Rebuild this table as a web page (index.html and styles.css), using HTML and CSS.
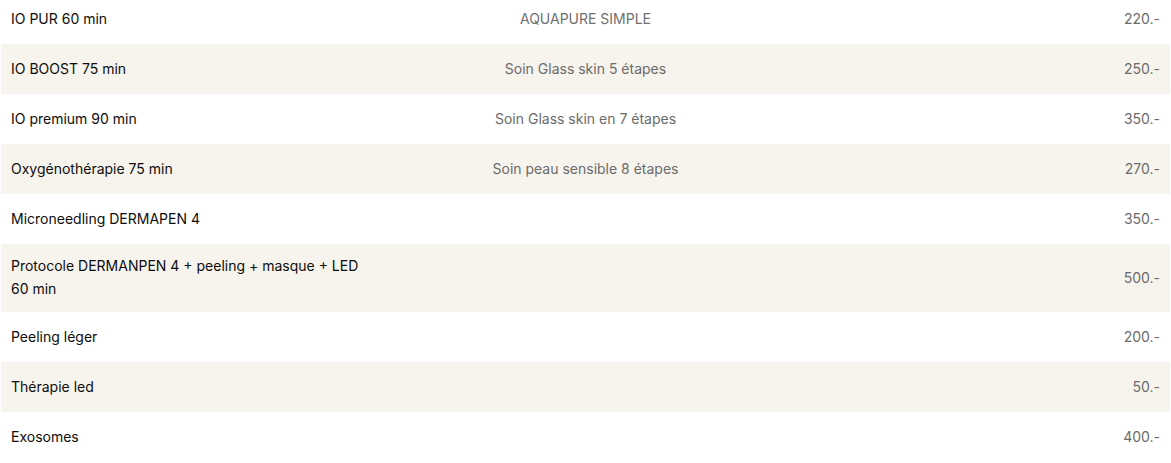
FILE: index.html
```html
<!DOCTYPE html>
<html lang="fr">
<head>
<meta charset="utf-8">
<title>Tarifs</title>
<link rel="stylesheet" href="styles.css">
</head>
<body>
<div class="price-list">
  <div class="row row-first">
    <div class="name">IO PUR 60 min</div>
    <div class="desc caps">AQUAPURE SIMPLE</div>
    <div class="price">220.-</div>
  </div>
  <div class="row alt">
    <div class="name">IO BOOST 75 min</div>
    <div class="desc">Soin Glass skin 5 étapes</div>
    <div class="price">250.-</div>
  </div>
  <div class="row">
    <div class="name">IO premium 90 min</div>
    <div class="desc">Soin Glass skin en 7 étapes</div>
    <div class="price">350.-</div>
  </div>
  <div class="row alt">
    <div class="name">Oxygénothérapie 75 min</div>
    <div class="desc">Soin peau sensible 8 étapes</div>
    <div class="price">270.-</div>
  </div>
  <div class="row">
    <div class="name">Microneedling DERMAPEN 4</div>
    <div class="desc"></div>
    <div class="price">350.-</div>
  </div>
  <div class="row alt">
    <div class="name">Protocole DERMANPEN 4 + peeling + masque + LED 60 min</div>
    <div class="desc"></div>
    <div class="price">500.-</div>
  </div>
  <div class="row">
    <div class="name">Peeling léger</div>
    <div class="desc"></div>
    <div class="price">200.-</div>
  </div>
  <div class="row alt">
    <div class="name">Thérapie led</div>
    <div class="desc"></div>
    <div class="price">50.-</div>
  </div>
  <div class="row">
    <div class="name">Exosomes</div>
    <div class="desc"></div>
    <div class="price">400.-</div>
  </div>
</div>
</body>
</html>
```
FILE: styles.css
```css
html, body {
  margin: 0;
  padding: 0;
  background: #ffffff;
}

body {
  font-family: "Inter", "Noto Sans", sans-serif;
  font-size: 14px;
  overflow: hidden;
}

.price-list {
  margin: -6px 1px 0 1px;
  display: flex;
  flex-direction: column;
}

.row {
  display: grid;
  grid-template-columns: 1fr 1fr 1fr;
  align-items: center;
  min-height: 50px;
  box-sizing: border-box;
  padding: 10px 10px 12px 10px;
  line-height: 23px;
}

.row.alt {
  background: #f7f4ee;
}

.name {
  color: #0d0d0d;
  padding-right: 20px;
}

.desc {
  color: #6b6b6b;
  text-align: center;
}

.desc.caps {
  color: #707070;
}

.price {
  color: #6b6b6b;
  text-align: right;
}
```
